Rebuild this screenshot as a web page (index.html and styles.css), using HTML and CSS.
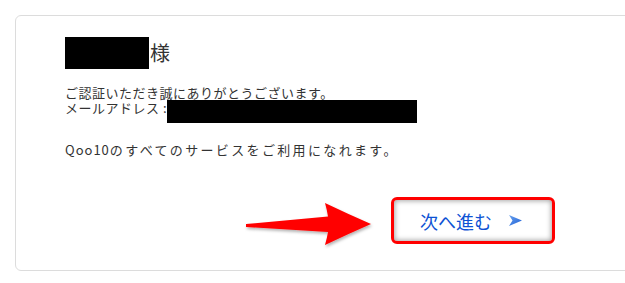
FILE: index.html
```html
<!DOCTYPE html>
<html lang="ja">
<head>
<meta charset="utf-8">
<link rel="stylesheet" href="styles.css">
</head>
<body>
<div class="card">
  <div class="name-row"><span class="redact name-redact"></span><span class="sama">様</span></div>
  <p class="msg">ご認証いただき誠にありがとうございます。<br>メールアドレス :<span class="redact mail-redact"></span></p>
  <p class="msg services"><span class="brand">Qoo10</span>のすべてのサービスをご利用になれます。</p>
  <div class="action-row">
    <svg class="pointer" width="130" height="50" viewBox="0 0 130 50">
      <defs>
        <filter id="sh" x="-10%" y="-20%" width="120%" height="150%">
          <feDropShadow dx="1" dy="2" stdDeviation="1.5" flood-color="#000" flood-opacity="0.3"/>
        </filter>
      </defs>
      <path d="M2,25 L84,17.5 Q83,11 81,4 Q104,15 127,25 Q104,35 81,46 Q83,39 84,33 L2,28 Z" fill="#ff0000" filter="url(#sh)"/>
    </svg>
    <div class="highlight">
      <a class="next-btn" href="#">次へ進む<svg class="chev" width="13" height="11" viewBox="0 0 13 11"><defs><linearGradient id="bg" x1="0" y1="0" x2="1" y2="1"><stop offset="0" stop-color="#6aa2ee"/><stop offset="1" stop-color="#1d5fd6"/></linearGradient></defs><path d="M0,0 L13,5.5 L0,11 L3.5,5.5 Z" fill="url(#bg)"/></svg></a>
    </div>
  </div>
</div>
</body>
</html>
```

FILE: styles.css
```css
html, body {
  margin: 0;
  padding: 0;
  background: #fff;
  overflow: hidden;
}
body {
  font-family: "Noto Sans CJK JP", "Liberation Sans", sans-serif;
  color: #333;
}
.card {
  box-sizing: border-box;
  margin: 15px 0 0 15px;
  width: 680px;
  height: 256px;
  border: 1px solid #dcdcdc;
  border-radius: 6px;
  padding: 21px 0 0 49px;
}
.name-row {
  display: flex;
  align-items: center;
  height: 32px;
}
.redact {
  display: inline-block;
  background: #000;
}
.name-redact {
  width: 84px;
  height: 32px;
}
.sama {
  font-size: 20px;
  line-height: 32px;
  margin-left: 1px;
  color: #333;
}
.msg {
  margin: 16px 0 0 0;
  font-size: 13px;
  line-height: 15px;
  letter-spacing: 0.5px;
  color: #333;
}
.mail-redact {
  width: 250px;
  height: 23px;
  vertical-align: top;
  margin-bottom: -8px;
  margin-left: 0;
}
.services {
  margin-top: 27px;
  letter-spacing: 2.35px;
}
.brand {
  letter-spacing: 1px;
}
.action-row {
  display: flex;
  align-items: flex-start;
  margin: 40px 0 0 179px;
}
.pointer {
  display: block;
  margin-top: 2px;
}
.highlight {
  box-sizing: border-box;
  margin-left: 17px;
  width: 164px;
  height: 47px;
  border: 3px solid #ff0000;
  border-radius: 6px;
  box-shadow: inset 0 0 5px 1px rgba(0, 0, 0, 0.35);
  display: flex;
  align-items: center;
}
.next-btn {
  display: flex;
  align-items: center;
  padding-left: 26px;
  font-size: 18px;
  line-height: 20px;
  color: #0d52d4;
  text-decoration: none;
}
.chev {
  display: block;
  margin-left: 17px;
}
```
